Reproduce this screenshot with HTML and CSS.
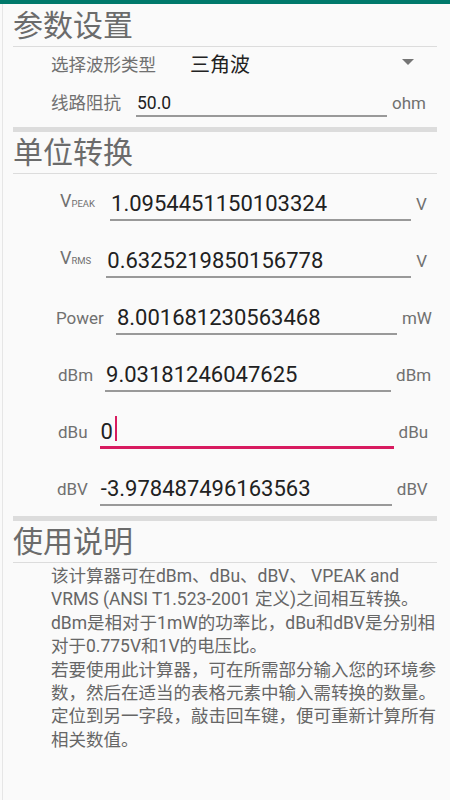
FILE: index.html
```html
<!DOCTYPE html>
<html lang="zh-CN">
<head>
    <meta charset="UTF-8">
    <meta name="viewport" content="width=device-width, initial-scale=1.0">
    <title>dBm 计算器</title>
    <link rel="stylesheet" href="styles.css">
</head>
<body>
    <div class="status"></div>

    <div class="frame">
        <div class="page">

            <!-- 参数设置 -->
            <section class="group group--params">
                <h2 class="group-title group-title--first">参数设置</h2>
                <div class="param-row">
                    <span class="param-label">选择波形类型</span>
                    <div class="select">
                        <span class="select-value">三角波</span>
                        <span class="select-arrow"></span>
                    </div>
                </div>
                <div class="param-row param-row--input">
                    <span class="param-label">线路阻抗</span>
                    <div class="field field--param">50.0</div>
                    <span class="unit">ohm</span>
                </div>
            </section>

            <div class="divider"></div>

            <!-- 单位转换 -->
            <section class="group">
                <h2 class="group-title">单位转换</h2>
                <div class="conv-row row-peak">
                    <span class="conv-label conv-label--v">V<small>PEAK</small></span>
                    <div class="field">1.0954451150103324</div>
                    <span class="unit">V</span>
                </div>
                <div class="conv-row row-rms">
                    <span class="conv-label conv-label--v">V<small>RMS</small></span>
                    <div class="field">0.6325219850156778</div>
                    <span class="unit">V</span>
                </div>
                <div class="conv-row row-power">
                    <span class="conv-label">Power</span>
                    <div class="field">8.001681230563468</div>
                    <span class="unit">mW</span>
                </div>
                <div class="conv-row row-dbm">
                    <span class="conv-label">dBm</span>
                    <div class="field">9.03181246047625</div>
                    <span class="unit">dBm</span>
                </div>
                <div class="conv-row row-dbu">
                    <span class="conv-label">dBu</span>
                    <div class="field field--focus">0<span class="caret"></span></div>
                    <span class="unit">dBu</span>
                </div>
                <div class="conv-row row-dbv">
                    <span class="conv-label">dBV</span>
                    <div class="field">-3.978487496163563</div>
                    <span class="unit">dBV</span>
                </div>
            </section>

            <div class="divider"></div>

            <!-- 使用说明 -->
            <section class="group">
                <h2 class="group-title">使用说明</h2>
                <p class="help">该计算器可在dBm、dBu、dBV、 VPEAK and<br>VRMS (ANSI T1.523-2001 定义)之间相互转换。<br>dBm是相对于1mW的功率比，dBu和dBV是分别相<br>对于0.775V和1V的电压比。<br>若要使用此计算器，可在所需部分输入您的环境参<br>数，然后在适当的表格元素中输入需转换的数量。<br>定位到另一字段，敲击回车键，便可重新计算所有<br>相关数值。</p>
            </section>

        </div>
    </div>
</body>
</html>
```

FILE: styles.css
```css
body {
    margin: 0;
    background-color: #fafafa;
    font-family: Roboto, "Noto Sans CJK SC", sans-serif;
    color: #212121;
}
.status {
    height: 4px;
    background-color: #00796b;
}
.frame {
    margin-left: 2px;
    border-left: 1px solid #e6e6e6;
    min-height: 796px;
}
.page {
    margin: 0 13px 0 10px;
}
.group-title {
    margin: 0;
    font-size: 30px;
    font-weight: normal;
    line-height: 41px;
    color: #6b6b6b;
    border-bottom: 1px solid #dcdcdc;
}
.group-title--first {
    padding-top: 1px;
}
.group--params {
    padding-bottom: 10px;
}
.divider {
    height: 5px;
    background-color: #dcdcdc;
}

/* parametres */
.param-row {
    display: flex;
    align-items: center;
    height: 33px;
    padding-left: 38px;
}
.param-label {
    font-size: 17.5px;
    color: #707070;
}
.select {
    flex: 1;
    display: flex;
    align-items: center;
    justify-content: space-between;
    margin-left: 34px;
    padding-right: 23px;
}
.select-value {
    font-size: 20px;
    color: #222;
}
.select-arrow {
    width: 0;
    height: 0;
    border-left: 6px solid transparent;
    border-right: 6px solid transparent;
    border-top: 6px solid #757575;
    margin-top: -3px;
}
.param-row--input {
    height: auto;
    align-items: flex-end;
    margin-top: 11px;
}
.param-row--input .param-label,
.param-row--input .unit {
    line-height: 24px;
    padding-bottom: 2px;
}

/* champs */
.field {
    font-size: 22px;
    line-height: 26px;
    padding: 0 0 2px 1px;
    border-bottom: 2px solid #999;
    white-space: nowrap;
    overflow: hidden;
}
.field--param {
    width: 250px;
    margin-left: 15px;
    font-size: 17.5px;
    line-height: 24px;
    padding-bottom: 0;
}
.field--focus {
    border-bottom: 3px solid #d81b60;
    padding-bottom: 1px;
}
.caret {
    display: inline-block;
    width: 2px;
    height: 25px;
    margin-left: 2px;
    background-color: #d81b60;
    vertical-align: -2px;
}
.unit {
    margin-left: 5px;
    font-size: 17px;
    color: #707070;
}

/* conversion */
.conv-row {
    display: flex;
    align-items: flex-end;
    height: 57px;
    padding-bottom: 10px;
    box-sizing: border-box;
}
.conv-label {
    font-size: 17px;
    line-height: 26px;
    padding-bottom: 4px;
    color: #707070;
    margin-right: 12px;
}
.conv-label small {
    font-size: 9.5px;
    vertical-align: baseline;
}
.conv-label--v {
    font-size: 18px;
    margin-right: 15px;
}
.conv-row .unit {
    line-height: 26px;
    padding-bottom: 4px;
    margin-left: 5px;
}
.row-peak { padding-left: 47px; }
.row-peak .field { width: 300px; }
.row-rms { padding-left: 47px; }
.row-rms .field { width: 304px; }
.row-power { padding-left: 43px; }
.row-power .field { width: 280px; }
.row-dbm { padding-left: 45px; }
.row-dbm .field { width: 285px; }
.row-dbu { padding-left: 45px; }
.row-dbu .field { width: 293px; }
.row-dbv { padding-left: 44px; }
.row-dbv .field { width: 291px; }

/* aide */
.help {
    margin: 0;
    padding: 2px 0 0 38px;
    font-size: 17.5px;
    line-height: 23.4px;
    color: #666;
    white-space: nowrap;
}
```
